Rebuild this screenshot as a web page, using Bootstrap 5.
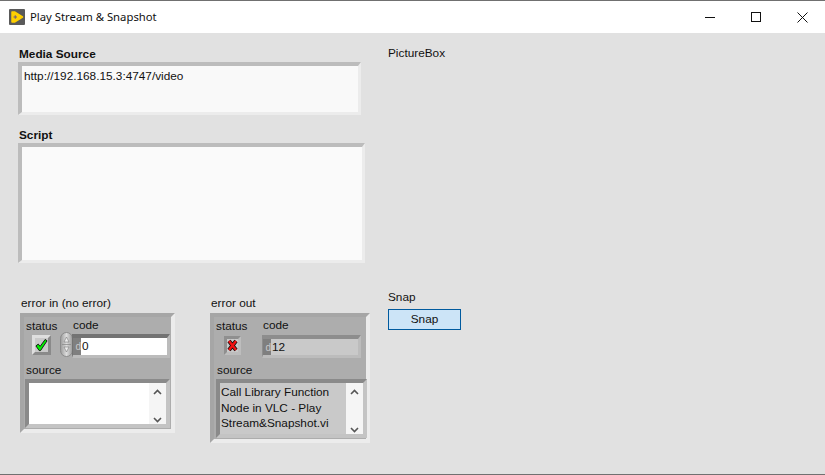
<!DOCTYPE html>
<html lang="en">
<head>
  <meta charset="UTF-8">
  <title>Play Stream &amp; Snapshot</title>
  <link rel="stylesheet" href="https://cdn.jsdelivr.net/npm/bootstrap@5.3.3/dist/css/bootstrap.min.css">
  <style>
    html, body { height: 475px; overflow: hidden; }
    body {
      font-family: "Liberation Sans", "Noto Sans", sans-serif;
      font-size: 11.8px;
      line-height: 16px;
      color: #111;
      background: #e1e1e1;
    }
    .app { height: 475px; border-top: 1px solid #707070; border-bottom: 1px solid #707070; }
    .titlebar { height: 32px; background: #fff; padding-left: 9px; }
    .titlebar .title { margin-left: 5px; font-family: "Noto Sans", sans-serif; font-size: 11.3px; }
    .win-btn { width: 46px; height: 32px; }
    .panel { padding: 13px 0 0 18px; }
    .left-col { width: 352px; }
    .right-col { margin-left: 18px; }
    .lbl { height: 16px; }
    .head-lbl { margin-left: 1px; }
    .bevel { border-style: solid; border-width: 4px 3px 3px 4px; border-color: #bcbcbc #ececec #ececec #bcbcbc; }
    .media-box { width: 343px; height: 53px; background: #f9f9f9; padding: 2px 2px; }
    .script-box { width: 347px; height: 120px; background: #fafafa; }
    .script-lbl { margin-top: 12px; }
    .err-row { margin-top: 32px; margin-left: 2px; }
    .err-in { width: 155px; }
    .err-out { width: 160px; margin-left: 35px; }
    .err-lbl { margin-left: 1px; margin-bottom: 2px; }
    .cluster {
      border-style: solid; border-width: 4px;
      border-color: #a6a6a6 #ececec #ececec #a6a6a6;
      background: #adadad;
      padding: 0 1px;
    }
    .err-in .cluster { height: 120px; }
    .err-out .cluster { height: 130px; }
    .st-lbl { padding-left: 1px; margin-top: 1px; }
    .err-in .st-col { width: 35px; flex-shrink: 0; }
    .err-out .st-col { width: 47px; flex-shrink: 0; }
    .led { background: #c9c9c9; border-style: solid; }
    .led-on { width: 19px; height: 20px; margin: 1px 0 0 7px; border-width: 3px; border-color: #dedede #8a8a8a #8a8a8a #dedede; }
    .led-off { width: 17px; height: 19px; margin: 2px 0 0 9px; border-width: 3px; border-color: #8f8f8f #bdbdbd #bdbdbd #8f8f8f; }
    .spin { width: 13px; margin-top: 15px; flex-shrink: 0; line-height: 0; }
    .num { height: 24px; border-style: solid; border-width: 4px 3px 3px 1px; border-color: #737373 #bcbcbc #bcbcbc #737373; }
    .num .radix { width: 8px; background: #7f7f7f; color: #c9c9c9; font-size: 10px; line-height: 17px; text-align: right; flex-shrink: 0; }
    .num .val { line-height: 17px; padding-left: 1px; }
    .src-lbl { padding-left: 1px; margin-top: 4px; }
    .src {
      border-style: solid; border-width: 4px;
      border-color: #8a8a8a #c4c4c4 #c4c4c4 #8a8a8a;
      margin-top: 1px;
    }
    .scroll { width: 17px; background: #f5f5f5; flex-shrink: 0; padding: 6px 0 1px; }
    .err-in .src { height: 49px; width: 145px; background: #fff; }
    .err-in .code-col { width: 98px; margin-left: -1px; }
    .err-in .val { background: #fff; }
    .err-out .src { height: 59px; width: 151px; background: #c9c9c9; margin-left: 1px; }
    .err-out .code-col { width: 99px; }
    .err-out .num { height: 23px; margin-top: 2px; background: #c9c9c9; border-color: #8d8d8d #bcbcbc #bcbcbc #8d8d8d; }
    .err-out .src-lbl { padding-left: 2px; }
    .src-text { padding: 2px 0 0 1px; line-height: 15.5px; width: 126px; }
    .code-lbl { margin-left: 1px; margin-bottom: 1px; }
    .pic-lbl { margin-top: -1px; }
    .snap-lbl { margin-top: 228px; }
    .snap-btn {
      --bs-btn-padding-y: 0; --bs-btn-padding-x: 0;
      --bs-btn-font-size: 11.8px; --bs-btn-line-height: 19px;
      --bs-btn-bg: #cce4f7; --bs-btn-border-color: #005a9e; --bs-btn-color: #111;
      --bs-btn-border-radius: 0;
      width: 73px; height: 21px; margin-top: 4px;
      font-family: inherit;
    }
  </style>
</head>
<body>
  <div class="app d-flex flex-column">
    <!-- title bar -->
    <div class="titlebar d-flex align-items-center">
      <svg width="16" height="16" viewBox="0 0 16 16">
        <rect width="16" height="16" rx="1" fill="#5a5a5a"/>
        <path d="M3 3 H5.500 L13.500 8 L5.500 13 H3 Z" fill="#ffd000" stroke="#ffd000" stroke-width="1.500" stroke-linejoin="round"/>
        <path d="M4.500 8 H8 M6.250 6.250 V9.750" stroke="#6a5a80" stroke-width="1"/>
      </svg>
      <span class="title">Play Stream &amp; Snapshot</span>
      <div class="ms-auto d-flex">
        <div class="win-btn d-flex align-items-center justify-content-center">
          <svg width="10" height="10" viewBox="0 0 10 10"><path d="M0 5.500 H10" stroke="#111"/></svg>
        </div>
        <div class="win-btn d-flex align-items-center justify-content-center">
          <svg width="10" height="10" viewBox="0 0 10 10"><rect x=".5" y=".5" width="9" height="9" fill="none" stroke="#111"/></svg>
        </div>
        <div class="win-btn d-flex align-items-center justify-content-center">
          <svg width="11" height="11" viewBox="0 0 11 11"><path d="M.5 .5 L10.500 10.500 M10.500 .5 L.5 10.500" stroke="#111"/></svg>
        </div>
      </div>
    </div>

    <!-- front panel -->
    <div class="panel d-flex">
      <div class="left-col">
        <div class="lbl fw-bold head-lbl">Media Source</div>
        <div class="bevel media-box">http://192.168.15.3:4747/video</div>
        <div class="lbl fw-bold head-lbl script-lbl">Script</div>
        <div class="bevel script-box"></div>

        <div class="err-row d-flex align-items-start">
          <div class="err-in">
            <div class="lbl err-lbl">error in (no error)</div>
            <div class="cluster">
              <div class="d-flex">
                <div class="st-col">
                  <div class="st-lbl text-nowrap">status</div>
                  <div class="led led-on d-flex align-items-center justify-content-center">
                    <svg width="14" height="14" viewBox="0 0 14 14">
                      <path d="M1 8 L3.500 6 L5.500 8.500 L11 1 L13 2.500 L6 13 L4.500 13 Z" fill="#00f000" stroke="#111" stroke-width="1" stroke-linejoin="round"/>
                    </svg>
                  </div>
                </div>
                <div class="spin">
                  <svg width="13" height="25" viewBox="0 0 13 25">
                    <defs>
                      <linearGradient id="spinFill" x1="0" x2="1" y1="0" y2="0">
                        <stop offset="0" stop-color="#9a9a9a"/>
                        <stop offset=".5" stop-color="#dcdcdc"/>
                        <stop offset="1" stop-color="#9a9a9a"/>
                      </linearGradient>
                    </defs>
                    <rect x=".5" y=".5" width="12" height="24" rx="6" fill="url(#spinFill)" stroke="#8b8b8b"/>
                    <path d="M6.500 5 L9 10 H4 Z M6.500 20 L9 15 H4 Z" fill="#eee" stroke="#777" stroke-width=".6"/>
                    <path d="M2 12.500 H11" stroke="#8b8b8b" stroke-width=".8"/>
                  </svg>
                </div>
                <div class="code-col">
                  <div class="lbl code-lbl">code</div>
                  <div class="num d-flex">
                    <span class="radix">d</span><span class="val flex-grow-1">0</span>
                  </div>
                </div>
              </div>
              <div class="src-lbl">source</div>
              <div class="src d-flex">
                <div class="flex-grow-1"></div>
                <div class="scroll d-flex flex-column justify-content-between align-items-center">
                  <svg width="9" height="6" viewBox="0 0 9 6"><path d="M1 5 L4.500 1.500 L8 5" fill="none" stroke="#555" stroke-width="1.600"/></svg>
                  <svg width="9" height="6" viewBox="0 0 9 6"><path d="M1 1 L4.500 4.500 L8 1" fill="none" stroke="#555" stroke-width="1.600"/></svg>
                </div>
              </div>
            </div>
          </div>

          <div class="err-out">
            <div class="lbl err-lbl">error out</div>
            <div class="cluster">
              <div class="d-flex">
                <div class="st-col">
                  <div class="st-lbl">status</div>
                  <div class="led led-off d-flex align-items-center justify-content-center">
                    <svg width="11" height="13" viewBox="0 0 11 13">
                      <path d="M2 2 L9 11 M9 2 L2 11" stroke="#111" stroke-width="4"/>
                      <path d="M2 2 L9 11 M9 2 L2 11" stroke="#f01010" stroke-width="2.400"/>
                    </svg>
                  </div>
                </div>
                <div class="code-col">
                  <div class="lbl" style="margin-left:1px">code</div>
                  <div class="num d-flex">
                    <span class="radix">d</span><span class="val flex-grow-1">12</span>
                  </div>
                </div>
              </div>
              <div class="src-lbl">source</div>
              <div class="src d-flex">
                <div class="src-text flex-grow-1">Call Library Function Node in VLC - Play Stream&amp;Snapshot.vi</div>
                <div class="scroll d-flex flex-column justify-content-between align-items-center">
                  <svg width="9" height="6" viewBox="0 0 9 6"><path d="M1 5 L4.500 1.500 L8 5" fill="none" stroke="#555" stroke-width="1.600"/></svg>
                  <svg width="9" height="6" viewBox="0 0 9 6"><path d="M1 1 L4.500 4.500 L8 1" fill="none" stroke="#555" stroke-width="1.600"/></svg>
                </div>
              </div>
            </div>
          </div>
        </div>
      </div>

      <div class="right-col">
        <div class="lbl pic-lbl">PictureBox</div>
        <div class="lbl snap-lbl">Snap</div>
        <button type="button" class="btn snap-btn d-block">Snap</button>
      </div>
    </div>
  </div>
  <script src="https://cdn.jsdelivr.net/npm/bootstrap@5.3.3/dist/js/bootstrap.bundle.min.js"></script>
</body>
</html>
